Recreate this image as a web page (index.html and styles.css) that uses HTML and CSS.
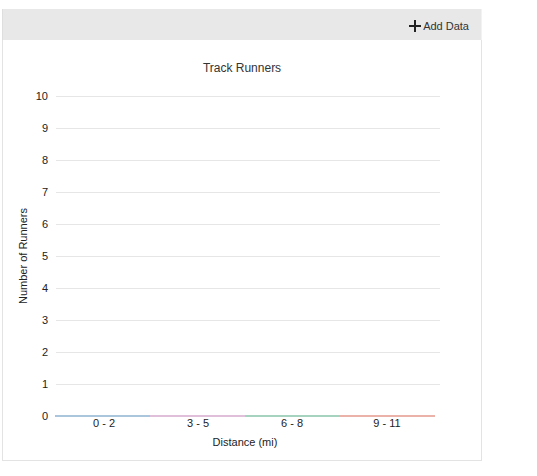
FILE: index.html
```html
<!DOCTYPE html>
<html>
<head>
<meta charset="utf-8">
<link rel="stylesheet" href="styles.css">
</head>
<body>
<div class="panel">
  <div class="toolbar">
    <button class="add-btn" type="button">
      <svg class="plus" width="12" height="12" viewBox="0 0 12 12"><path d="M6 0v12M0 6h12" stroke="#222" stroke-width="2"/></svg>
      <span>Add Data</span>
    </button>
  </div>
  <div class="chart-box">
    <svg class="chart" width="478" height="420" viewBox="3 40 478 420">
      <text class="title" x="242" y="72" text-anchor="middle">Track Runners</text>
      <g class="grid">
        <line x1="56" x2="440" y1="96.5" y2="96.5"/>
        <line x1="56" x2="440" y1="128.5" y2="128.5"/>
        <line x1="56" x2="440" y1="160.5" y2="160.5"/>
        <line x1="56" x2="440" y1="192.5" y2="192.5"/>
        <line x1="56" x2="440" y1="224.5" y2="224.5"/>
        <line x1="56" x2="440" y1="256.5" y2="256.5"/>
        <line x1="56" x2="440" y1="288.5" y2="288.5"/>
        <line x1="56" x2="440" y1="320.5" y2="320.5"/>
        <line x1="56" x2="440" y1="352.5" y2="352.5"/>
        <line x1="56" x2="440" y1="384.5" y2="384.5"/>
      </g>
      <g class="ylab" text-anchor="end">
        <text x="48" y="100">10</text>
        <text x="48" y="132">9</text>
        <text x="48" y="164">8</text>
        <text x="48" y="196">7</text>
        <text x="48" y="228">6</text>
        <text x="48" y="260">5</text>
        <text x="48" y="292">4</text>
        <text x="48" y="324">3</text>
        <text x="48" y="356">2</text>
        <text x="48" y="388">1</text>
        <text x="48" y="420">0</text>
      </g>
      <g class="bars">
        <line x1="55" x2="150" y1="416" y2="416" stroke="#a9c6dc"/>
        <line x1="150" x2="245" y1="416" y2="416" stroke="#dfbfda"/>
        <line x1="245" x2="340" y1="416" y2="416" stroke="#a6d3bf"/>
        <line x1="340" x2="435" y1="416" y2="416" stroke="#ebb2aa"/>
      </g>
      <g class="xlab" text-anchor="middle">
        <text x="104" y="427">0 - 2</text>
        <text x="198" y="427">3 - 5</text>
        <text x="292" y="427">6 - 8</text>
        <text x="387" y="427">9 - 11</text>
      </g>
      <text class="axis-title" x="245" y="446" text-anchor="middle">Distance (mi)</text>
      <text class="axis-title" transform="translate(27 256) rotate(-90)" text-anchor="middle">Number of Runners</text>
    </svg>
  </div>
</div>
</body>
</html>
```
FILE: styles.css
```css
html, body {
  margin: 0;
  padding: 0;
  background: #fff;
}
body {
  padding: 9px 0 0 2px;
  font-family: "Liberation Sans", Arial, sans-serif;
}
.panel {
  width: 480px;
  display: flex;
  flex-direction: column;
}
.toolbar {
  height: 31px;
  background: #e8e8e8;
  border-left: 1px solid #dedede;
  border-right: 1px solid #f2f2f2;
  display: flex;
  justify-content: flex-end;
  align-items: center;
  box-sizing: border-box;
}
.add-btn {
  display: flex;
  align-items: center;
  gap: 2px;
  border: 0;
  background: transparent;
  padding: 2px 12px 0 0;
  font-family: "Liberation Sans", Arial, sans-serif;
  font-size: 11px;
  color: #333;
  height: 100%;
}
.plus {
  display: block;
}
.chart-box {
  height: 421px;
  border: 1px solid #e3e3e3;
  border-top: 0;
  box-sizing: border-box;
  display: flex;
}
.chart {
  display: block;
}
.title {
  font-size: 12px;
  fill: #333;
}
.grid line {
  stroke: #e6e6e6;
  stroke-width: 1;
}
.bars line {
  stroke-width: 2;
}
.ylab text, .xlab text {
  font-size: 11px;
  fill: #222;
}
.axis-title {
  font-size: 11px;
  fill: #222;
}
```
